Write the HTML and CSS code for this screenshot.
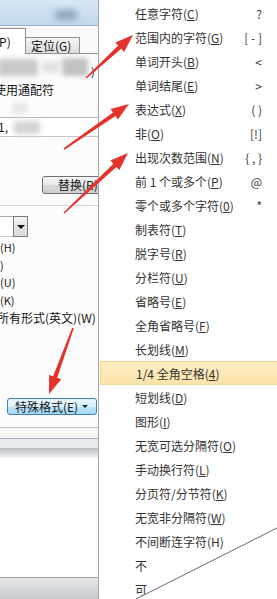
FILE: index.html
```html
<!DOCTYPE html>
<html lang="zh-CN">
<head>
<meta charset="utf-8">
<title>特殊格式菜单</title>
<link rel="stylesheet" href="styles.css">
</head>
<body>
<div class="screen">
  <div class="left">
    <div class="titlebar"><span class="blur-title"></span></div>
    <div class="tabstrip">
      <div class="tab active"><span class="tab-text-clip">(P)</span></div>
      <div class="tab">定位(G)</div>
      <div class="tab-fill"></div>
    </div>
    <div class="panel">
      <div class="find-row">
        <span class="blob b1"></span><span class="blob b2"></span><span class="blob b3"></span><span class="paren">)</span>
      </div>
      <div class="label wild">使用通配符</div>
      <div class="blob-row"><span class="blob b4"></span></div>
      <div class="replace-field"><span class="rtext">1,</span><span class="blob b5"></span></div>
      <div class="btn-row"><div class="btn replace-btn">替换(R)</div></div>
      <div class="sep"></div>
      <div class="combo"><span class="combo-field"></span><span class="combo-arrow"><span class="tri"></span></span></div>
      <div class="checks">
        <div class="chk">(H)</div>
        <div class="chk">)</div>
        <div class="chk">(U)</div>
        <div class="chk">(K)</div>
        <div class="chk wide">所有形式(英文)(W)</div>
      </div>
      <div class="btn-row2"><div class="btn special-btn">特殊格式(E)<span class="caret"></span></div></div>
    </div>
    <div class="dlg-bottom"></div>
    <div class="doc"></div>
    <div class="statusbar"></div>
  </div>
  <div class="menu">
    <div class="item"><span>任意字符(<u>C</u>)</span><span class="key">?</span></div>
    <div class="item"><span>范围内的字符(<u>G</u>)</span><span class="key">[ - ]</span></div>
    <div class="item"><span>单词开头(<u>B</u>)</span><span class="key">&lt;</span></div>
    <div class="item"><span>单词结尾(<u>E</u>)</span><span class="key">&gt;</span></div>
    <div class="item"><span>表达式(<u>X</u>)</span><span class="key">( )</span></div>
    <div class="item"><span>非(<u>O</u>)</span><span class="key">[!]</span></div>
    <div class="item"><span>出现次数范围(<u>N</u>)</span><span class="key">{ , }</span></div>
    <div class="item"><span>前 1 个或多个(<u>P</u>)</span><span class="key">@</span></div>
    <div class="item"><span>零个或多个字符(<u>0</u>)</span><span class="key">*</span></div>
    <div class="item"><span>制表符(<u>T</u>)</span></div>
    <div class="item"><span>脱字号(<u>R</u>)</span></div>
    <div class="item"><span>分栏符(<u>U</u>)</span></div>
    <div class="item"><span>省略号(<u>E</u>)</span></div>
    <div class="item"><span>全角省略号(<u>F</u>)</span></div>
    <div class="item"><span>长划线(<u>M</u>)</span></div>
    <div class="item hover"><span>1/4 全角空格(<u>4</u>)</span></div>
    <div class="item"><span>短划线(<u>D</u>)</span></div>
    <div class="item"><span>图形(<u>I</u>)</span></div>
    <div class="item"><span>无宽可选分隔符(<u>O</u>)</span></div>
    <div class="item"><span>手动换行符(<u>L</u>)</span></div>
    <div class="item"><span>分页符/分节符(<u>K</u>)</span></div>
    <div class="item"><span>无宽非分隔符(<u>W</u>)</span></div>
    <div class="item"><span>不间断连字符(H)</span></div>
    <div class="item"><span>不</span></div>
    <div class="item"><span>可</span></div>
  </div>
  <svg class="overlay" width="277" height="599" viewBox="0 0 277 599">
    <polygon points="277,528 277,599 136,599" fill="#ffffff"/>
    <line x1="277" y1="528" x2="136" y2="599" stroke="#6a6a6a" stroke-width="1"/>
    <g fill="#e5322d">
      <polygon points="86.5,78.6 121.2,48.8 124.1,52 133,35 115.3,42.4 118.2,45.5 85.5,77.4"/>
      <polygon points="64.5,149.7 115.5,116.1 117.9,119.6 129,104 110.5,108.9 113,112.4 63.5,148.3"/>
      <polygon points="64.5,213.6 116.4,166.9 119.3,170.1 128,153 110.4,160.6 113.4,163.7 63.5,212.4"/>
      <polygon points="72.2,327.7 53.1,376.3 49.1,374.9 49,394 61.3,379.3 57.2,377.8 73.8,328.3"/>
    </g>
  </svg>
</div>
</body>
</html>
```

FILE: styles.css
```css
html, body {
  margin: 0;
  padding: 0;
  background: #ffffff;
}
body {
  width: 277px;
  height: 599px;
  overflow: hidden;
  font-family: "Noto Sans CJK SC", "Noto Sans", sans-serif;
  font-size: 12px;
}
.screen {
  position: relative;
  display: flex;
  width: 277px;
  height: 599px;
  overflow: hidden;
}

/* ---------- left: dialog behind the menu ---------- */
.left {
  width: 98px;
  flex: none;
  border-right: 1px solid #a2a4a7;
  display: flex;
  flex-direction: column;
  overflow: hidden;
  background: #fbfbfb;
  color: #141414;
}
.titlebar {
  flex: none;
  border-bottom: 1px solid #9fb4cc;
  background: linear-gradient(#d9e7f5, #c3d7ec);
  display: flex;
  padding: 10px 0 0 55px;
  box-sizing: border-box;
  height: 26px;
}
.blur-title {
  width: 22px;
  height: 10px;
  background: #8ea3bd;
  filter: blur(3px);
  border-radius: 4px;
}
.tabstrip {
  height: 28px;
  flex: none;
  display: flex;
  align-items: flex-end;
  background: #fafafa;
}
.tab {
  box-sizing: border-box;
  height: 17px;
  width: 55px;
  border: 1px solid #8e8f8f;
  background: linear-gradient(#f4f4f4, #dedede);
  font-size: 12px;
  line-height: 15px;
  padding-left: 5px;
  white-space: nowrap;
}
.tab.active {
  width: 26px;
  height: 26px;
  border-left: none;
  border-bottom: none;
  background: #ffffff;
  padding: 5px 0 0 0;
  overflow: hidden;
  line-height: 16px;
}
.tab-text-clip {
  display: block;
  margin-left: -5px;
}
.tab-fill {
  flex: 1;
  height: 1px;
  background: #8e8f8f;
}
.tab + .tab { margin-left: -1px; }

.panel {
  display: flex;
  flex-direction: column;
  background: #fcfcfc;
}
.find-row {
  height: 26px;
  display: flex;
  align-items: center;
}
.blob {
  display: block;
  filter: blur(2.5px);
  border-radius: 3px;
}
.b1 { width: 40px; height: 17px; background: #c9c9c9; margin-left: -2px; }
.b2 { width: 18px; height: 12px; background: #e2e2e2; margin-left: 4px; }
.b3 { width: 26px; height: 18px; background: #c2c2c2; margin-left: 2px; }
.paren { margin-left: 3px; font-size: 11px; padding-top: 8px; }
.label {
  height: 20px;
  line-height: 20px;
  white-space: nowrap;
}
.wild { margin-left: -6px; }
.blob-row {
  height: 17px;
  display: flex;
  align-items: center;
}
.b4 { width: 16px; height: 11px; background: #e6e6e6; margin-left: 12px; }
.replace-field {
  height: 18px;
  border-top: 1px solid #b9b9b9;
  border-bottom: 1px solid #c5c5c5;
  display: flex;
  align-items: center;
  background: #ffffff;
}
.rtext { margin-left: -2px; line-height: 18px; }
.b5 { width: 26px; height: 13px; background: #d4d4d4; margin-left: 6px; }
.btn-row {
  margin-top: 39px;
  height: 18px;
  display: flex;
  padding-left: 42px;
}
.btn {
  box-sizing: border-box;
  border: 1px solid #707070;
  border-radius: 3px;
  background: linear-gradient(#f6f6f6 0%, #e8e8e8 50%, #d8d8d8 51%, #cfcfcf 100%);
  white-space: nowrap;
  font-size: 12px;
}
.replace-btn {
  width: 80px;
  height: 18px;
  line-height: 16px;
  padding-left: 15px;
  flex: none;
}
.sep {
  margin-top: 11px;
  height: 1px;
  background: #d6d6d6;
}
.combo {
  margin-top: 10px;
  height: 21px;
  display: flex;
  width: 28px;
}
.combo-field {
  width: 13px;
  box-sizing: border-box;
  border-top: 1px solid #a9a9a9;
  border-bottom: 1px solid #c9c9c9;
  background: #fff;
}
.combo-arrow {
  width: 15px;
  box-sizing: border-box;
  border: 1px solid #7a7a7a;
  background: linear-gradient(#f3f3f3, #d9d9d9);
  display: flex;
  align-items: center;
  justify-content: center;
}
.tri {
  width: 0;
  height: 0;
  border-left: 4px solid transparent;
  border-right: 4px solid transparent;
  border-top: 4px solid #111;
}
.checks {
  margin-top: 2px;
  display: flex;
  flex-direction: column;
}
.chk {
  height: 17.5px;
  line-height: 17.5px;
  white-space: nowrap;
  font-size: 11px;
}
.chk.wide { margin-left: -3px; font-size: 12px; }
.btn-row2 {
  margin-top: 71px;
  display: flex;
  padding-left: 7px;
}
.special-btn {
  width: 90px;
  height: 17px;
  line-height: 15px;
  padding-left: 7px;
  border-color: #3c7fb1;
  background: linear-gradient(#eaf6fd 0%, #d9f0fc 50%, #bee6fd 51%, #a7d9f5 100%);
  display: flex;
  align-items: center;
}
.caret {
  margin-left: 4px;
  width: 0;
  height: 0;
  border-left: 3px solid transparent;
  border-right: 3px solid transparent;
  border-top: 3px solid #222;
}
.dlg-bottom {
  margin-top: 12px;
  height: 30px;
  flex: none;
  border-top: 1px solid #c2c2c2;
  background:
    linear-gradient(#f7f7f7 0 10px, #a8b0b8 10px 11px, #e9edf1 11px 20px, #b9bdc2 20px, #f4f4f4 30px);
}
.doc {
  flex: 1;
  background: #ffffff;
}
.statusbar {
  height: 21px;
  flex: none;
  border-top: 1px solid #a0a0a0;
  background: linear-gradient(#e6e8ea, #c6cacf);
}

/* ---------- right: the drop-down menu ---------- */
.menu {
  width: 178px;
  flex: none;
  background: #ffffff;
  padding-top: 1px;
  display: flex;
  flex-direction: column;
  color: #333333;
}
.item {
  height: 24px;
  flex: none;
  box-sizing: border-box;
  display: flex;
  align-items: center;
  justify-content: space-between;
  padding: 0 15px 0 36px;
  white-space: nowrap;
  font-size: 12px;
}
.item u {
  text-decoration-thickness: 1px;
  text-underline-offset: 1px;
}
.key {
  color: #3a3a3a;
  font-size: 12px;
}
.item.hover {
  margin-left: 1px;
  margin-right: -3px;
  padding-left: 35px;
  background: linear-gradient(#fdedc4, #fbe3aa);
  border: 1px solid #f1d491;
}

.overlay {
  position: absolute;
  left: 0;
  top: 0;
  pointer-events: none;
}
```
